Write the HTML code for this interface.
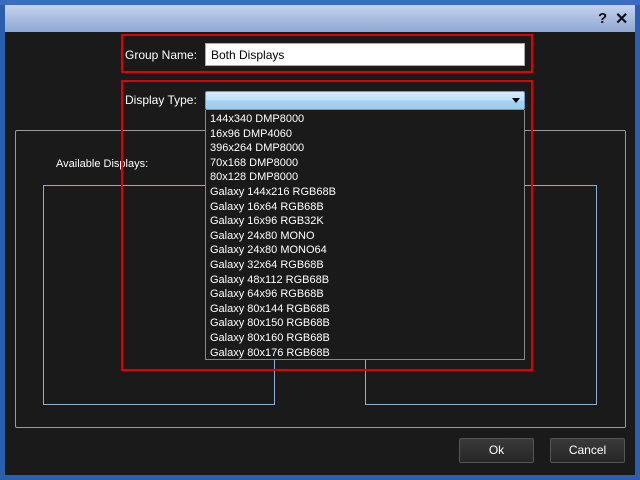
<!DOCTYPE html>
<html><head><style>
*{margin:0;padding:0;box-sizing:border-box}
body{width:640px;height:480px;background:#1a1a1a;position:relative;overflow:hidden;font-family:"Liberation Sans",sans-serif;font-size:11px;color:#fff}
.a{position:absolute}
</style></head><body>
<div class="a" style="left:0;top:0;width:640px;height:480px;border:5px solid #2a5fb0;border-top:none;background:#1a1a1a"></div>
<div class="a" style="left:0;top:0;width:640px;height:5px;background:#3a6cc0"></div>
<div class="a" style="left:5px;top:5px;width:630px;height:27px;background:linear-gradient(#c5d3ec,#8ea7d4)"></div>
<div class="a" style="left:598px;top:10px;font-weight:bold;font-size:15px;color:#111">?</div>
<div class="a" style="left:615px;top:9px;font-weight:bold;font-size:16px;color:#111">✕</div>
<div class="a" style="left:0;top:475px;width:640px;height:5px;background:#2a5fb0"></div>

<div class="a" style="left:15px;top:130px;width:611px;height:298px;border:1px solid #9a9a9a;border-radius:2px"></div>
<div class="a" style="left:56px;top:158px;font-size:11px">Available Displays:</div>
<div class="a" style="left:43px;top:185px;width:232px;height:220px;border:1px solid #8ab0d8"></div>
<div class="a" style="left:365px;top:185px;width:232px;height:220px;border:1px solid #8ab0d8"></div>

<div class="a" style="left:121px;top:34px;width:412px;height:39px;border:2px solid #e00000"></div>
<div class="a" style="left:125px;top:48px;font-size:12px">Group Name:</div>
<div class="a" style="left:205px;top:43px;width:320px;height:23px;background:#fff;border:1px solid #aaa;color:#000;font-size:12px;padding:4px 0 0 5px">Both Displays</div>

<div class="a" style="left:121px;top:80px;width:412px;height:291px;border:2px solid #e00000"></div>
<div class="a" style="left:125px;top:93px;font-size:12px">Display Type:</div>
<div class="a" style="left:205px;top:91px;width:320px;height:19px;border:1px solid #6a9ccc;border-radius:2px;background:linear-gradient(#d4ecfa 0%,#bfe0f6 50%,#a6d3f0 51%,#9ccdee 100%)"></div>
<div class="a" style="left:512px;top:98px;width:0;height:0;border-left:4px solid transparent;border-right:4px solid transparent;border-top:5px solid #000"></div>
<div class="a" style="left:205px;top:110px;width:320px;height:250px;border:1px solid #888;border-top:none;background:#1a1a1a;padding:2px 0 0 4px;font-size:11px;line-height:14.6px;color:#fff">
144x340 DMP8000<br>16x96 DMP4060<br>396x264 DMP8000<br>70x168 DMP8000<br>80x128 DMP8000<br>Galaxy 144x216 RGB68B<br>Galaxy 16x64 RGB68B<br>Galaxy 16x96 RGB32K<br>Galaxy 24x80 MONO<br>Galaxy 24x80 MONO64<br>Galaxy 32x64 RGB68B<br>Galaxy 48x112 RGB68B<br>Galaxy 64x96 RGB68B<br>Galaxy 80x144 RGB68B<br>Galaxy 80x150 RGB68B<br>Galaxy 80x160 RGB68B<br>Galaxy 80x176 RGB68B
</div>

<div class="a" style="left:459px;top:438px;width:75px;height:25px;border:1px solid #555;border-radius:2px;background:linear-gradient(#3a3a3a,#262626);text-align:center;line-height:23px;font-size:12px">Ok</div>
<div class="a" style="left:550px;top:438px;width:75px;height:25px;border:1px solid #555;border-radius:2px;background:linear-gradient(#3a3a3a,#262626);text-align:center;line-height:23px;font-size:12px">Cancel</div>
</body></html>
